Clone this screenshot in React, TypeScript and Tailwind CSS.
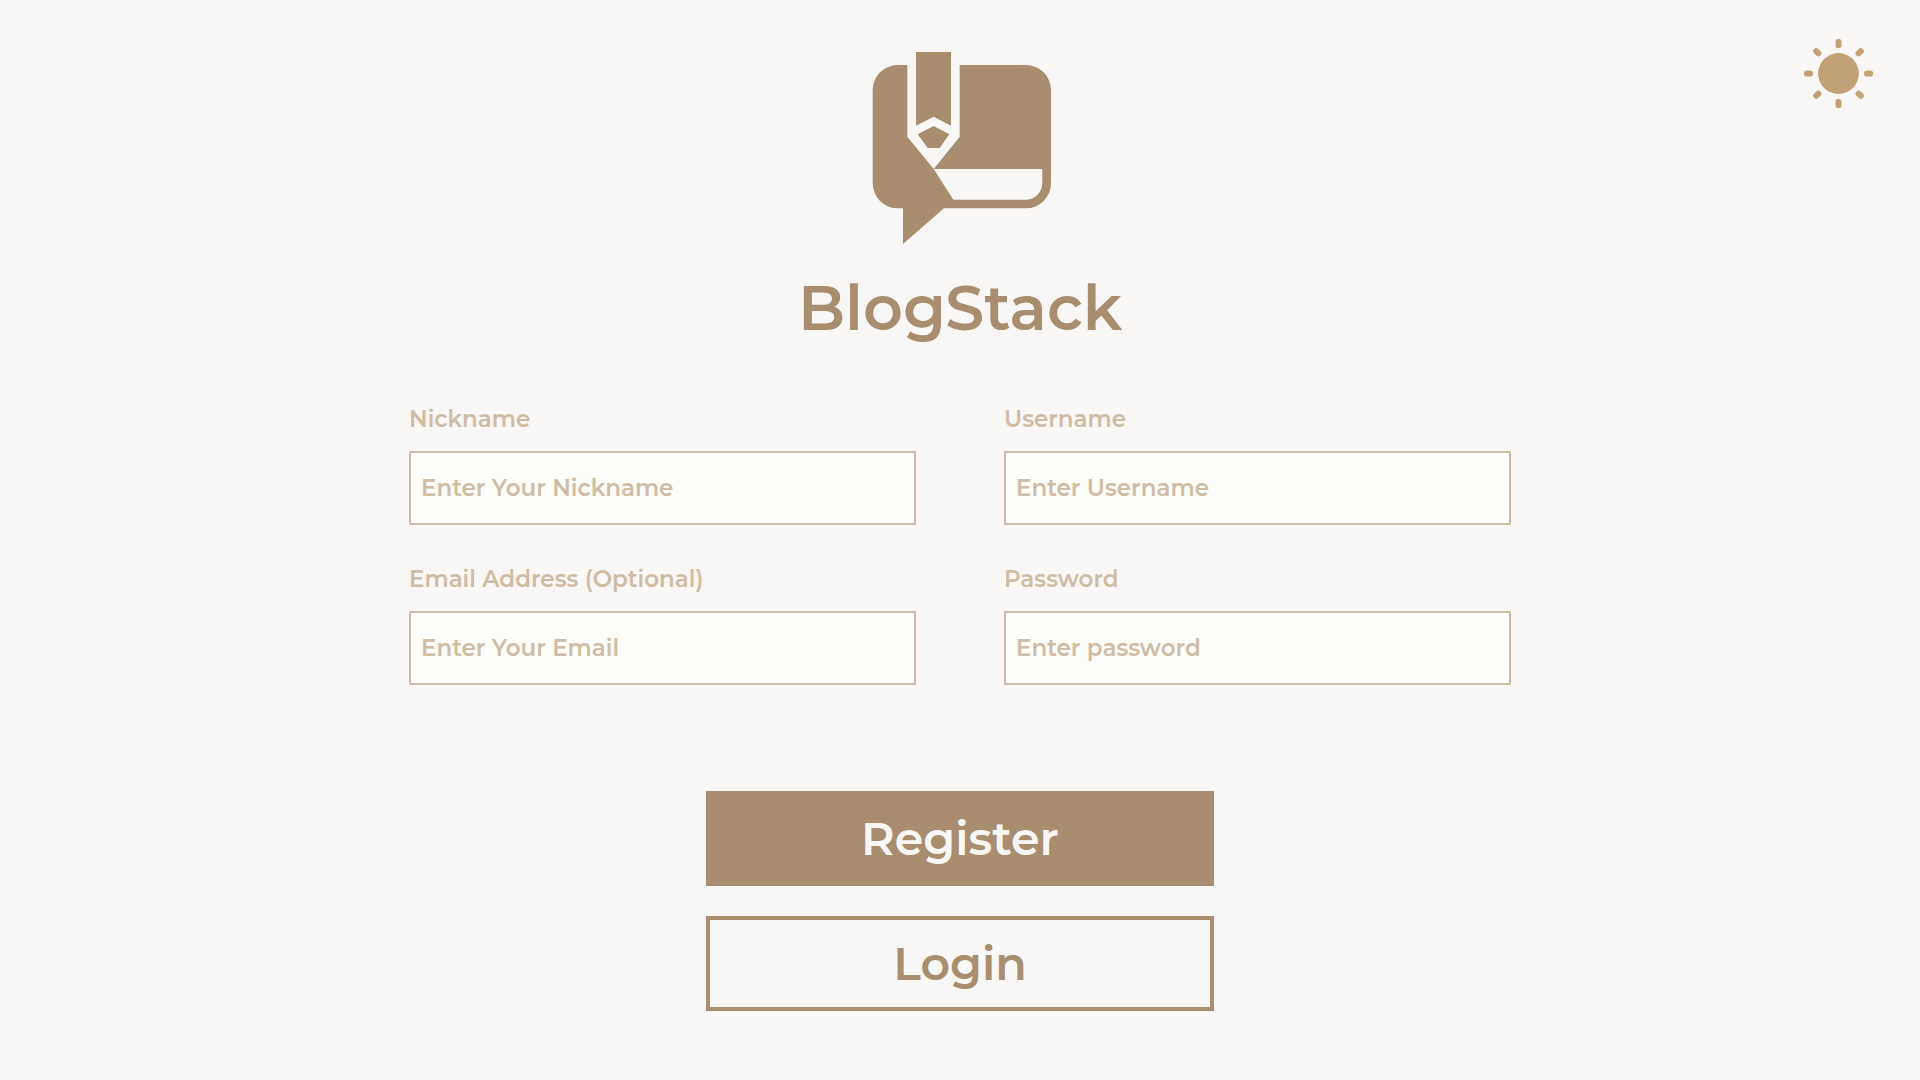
function Logo() {
  return (
    <svg viewBox="0 0 182 192" className="mt-[14px] h-48 w-[182px]" fill="#a88d6e" role="img" aria-label="BlogStack logo">
      <path d="M28.7 13H38.3V84.7L64.7 117L84.3 147.7H157A16.3 17 0 0 0 173.3 130.7V117H64.7L90.7 84.7V13H157A25 25 0 0 1 182 38V131.3A25 25 0 0 1 157 156.3H75L34 192V156.3H28.7A25 25 0 0 1 3.7 131.3V38A25 25 0 0 1 28.7 13Z" />
      <path d="M47 0H82V73.7L64.7 64.7L47 73.7Z" />
      <path d="M64.7 74L80.3 82.3L70.7 96H58.7L48.7 82.3Z" />
    </svg>
  );
}

function SunIcon() {
  const angles = [0, 45, 90, 135, 180, 225, 270, 315];
  return (
    <svg viewBox="0 0 70 70" className="size-[70px]" fill="#c3a177" aria-hidden="true">
      <circle cx="35.5" cy="35.5" r="20.4" />
      {angles.map((a) => (
        <rect key={a} x="32.5" y="1" width="6" height="9" rx="2.8" transform={`rotate(${a} 35.5 35.5)`} />
      ))}
    </svg>
  );
}

type FieldProps = { id: string; label: string; placeholder: string; type: string };

const fields: FieldProps[] = [
  { id: "nickname", label: "Nickname", placeholder: "Enter Your Nickname", type: "text" },
  { id: "username", label: "Username", placeholder: "Enter Username", type: "text" },
  { id: "email", label: "Email Address (Optional)", placeholder: "Enter Your Email", type: "email" },
  { id: "password", label: "Password", placeholder: "Enter password", type: "password" },
];

function Field({ id, label, placeholder, type }: FieldProps) {
  return (
    <div className="flex flex-col gap-4">
      <label htmlFor={id} className="text-[23px] leading-8 text-[#d0bca5]">
        {label}
      </label>
      <input
        id={id}
        type={type}
        placeholder={placeholder}
        className="h-[74px] w-full border-2 border-[#cdbba7] bg-[#fdfdfa] px-2.5 text-[23px] font-semibold text-[#a88d6e] outline-none placeholder:text-[#d0bca5]"
      />
    </div>
  );
}

export default function App() {
  return (
    <div className="min-h-screen bg-[#f9f7f5] pb-16 font-['Montserrat','Inter',sans-serif] font-semibold text-[#a88d6e]">
      <header className="grid grid-cols-[1fr_auto_1fr] items-start px-[47px] pt-[38px]">
        <div className="col-start-2 flex flex-col items-center">
          <Logo />
          <h1 className="mt-6 text-[62px] leading-[80px]">BlogStack</h1>
        </div>
        <button type="button" aria-label="Toggle theme" className="justify-self-end">
          <SunIcon />
        </button>
      </header>
      <form className="mx-auto mt-[55px] w-full max-w-[1102px]">
        <div className="grid grid-cols-2 gap-x-[88px] gap-y-[38px]">
          {fields.map((f) => (
            <Field key={f.id} {...f} />
          ))}
        </div>
        <div className="mx-auto mt-[106px] flex w-full max-w-[508px] flex-col gap-[30px] text-[46px]">
          <button type="submit" className="h-[95px] bg-[#a88d6e] text-[#f9f7f5]">
            Register
          </button>
          <button type="button" className="h-[95px] border-4 border-[#a88d6e]">
            Login
          </button>
        </div>
      </form>
    </div>
  );
}
